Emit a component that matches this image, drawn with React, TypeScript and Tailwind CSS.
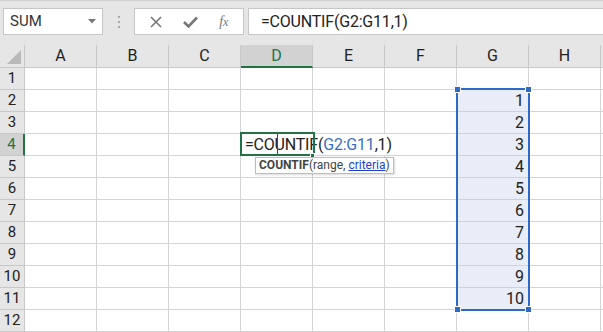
import React from 'react';

const cols = ['A', 'B', 'C', 'D', 'E', 'F', 'G', 'H', ''];
const rows = [1, 2, 3, 4, 5, 6, 7, 8, 9, 10, 11, 12];

function Toolbar() {
  return (
    <div className="h-[45px] bg-[#e6e6e6] border-t border-[#d0d0d0] flex items-start pt-[7px] pl-[3px]">
      {/* Name box */}
      <div className="w-[100px] h-[27px] bg-white border border-[#c6c6c6] flex items-center justify-between pl-[6px] pr-[6px]">
        <span className="text-[15px] text-[#333]">SUM</span>
        <svg width="8" height="5" viewBox="0 0 8 5">
          <path d="M0 0 L8 0 L4 4.5 Z" fill="#777" />
        </svg>
      </div>

      {/* separator dots */}
      <div className="w-[31px] h-[27px] flex flex-col items-center justify-center gap-[3px]">
        <div className="w-[2px] h-[2px] bg-[#a8a8a8]" />
        <div className="w-[2px] h-[2px] bg-[#a8a8a8]" />
        <div className="w-[2px] h-[2px] bg-[#a8a8a8]" />
      </div>

      {/* cancel / enter / fx */}
      <div className="w-[110px] h-[27px] bg-white border border-[#c6c6c6] flex items-center justify-around px-[4px]">
        <svg width="12" height="12" viewBox="0 0 12 12">
          <path d="M1 1 L11 11 M11 1 L1 11" stroke="#777" strokeWidth="1.6" />
        </svg>
        <svg width="15" height="12" viewBox="0 0 15 12">
          <path d="M1 6 L5.5 10.5 L14 1.5" stroke="#777" strokeWidth="2.6" fill="none" />
        </svg>
        <span className="font-['Liberation_Serif',serif] italic text-[14px] text-[#777] leading-none">
          f<span className="text-[12px]">x</span>
        </span>
      </div>

      {/* formula input */}
      <div className="ml-[4px] flex-1 h-[27px] bg-white border border-r-0 border-[#c6c6c6] flex items-center pl-[12px]">
        <span className="text-[16px] text-[#222] tracking-[-0.2px]">=COUNTIF(G2:G11,1)</span>
      </div>
    </div>
  );
}

export default function App() {
  return (
    <div className="w-[603px] h-[332px] overflow-hidden bg-white font-['Roboto',sans-serif] text-[#222]">
      <Toolbar />

      <div className="relative">
        <div className="grid grid-cols-[25px_repeat(9,72px)] grid-rows-[23px_repeat(12,22px)]">
          {/* corner */}
          <div className="bg-[#e6e6e6] border-r border-b border-[#c8c8c8] flex items-end justify-end pr-[3px] pb-[3px]">
            <svg width="14" height="14" viewBox="0 0 14 14">
              <path d="M14 0 L14 14 L0 14 Z" fill="#b9b9b9" />
            </svg>
          </div>
          {cols.map((c, i) =>
            c === 'D' ? (
              <div
                key={i}
                className="bg-[#d2d2d2] border-r border-[#c8c8c8] border-b-2 border-b-[#217346] flex items-center justify-center text-[16px] text-[#217346]"
              >
                {c}
              </div>
            ) : (
              <div
                key={i}
                className="bg-[#e6e6e6] border-r border-b border-[#c8c8c8] flex items-center justify-center text-[16px] text-[#222]"
              >
                {c}
              </div>
            )
          )}

          {rows.map((r) => (
            <React.Fragment key={r}>
              {r === 4 ? (
                <div className="bg-[#d2d2d2] border-b border-[#c8c8c8] border-r-2 border-r-[#217346] flex items-center justify-center text-[15px] text-[#217346]">
                  {r}
                </div>
              ) : (
                <div className="bg-[#e6e6e6] border-r border-b border-[#c8c8c8] flex items-center justify-center text-[15px] text-[#222]">
                  {r}
                </div>
              )}
              {cols.map((c, i) => {
                const inSel = c === 'G' && r >= 2 && r <= 11;
                return (
                  <div
                    key={i}
                    className={
                      inSel
                        ? 'bg-[#e8edf7] border-r border-b border-[#cdd1d8] flex items-center justify-end pr-[4px] text-[16px]'
                        : 'border-r border-b border-[#d4d4d4]'
                    }
                  >
                    {inSel ? r - 1 : null}
                  </div>
                );
              })}
            </React.Fragment>
          ))}
        </div>

        {/* edit area of D4, spills to the right */}
        <div className="absolute left-[242px] top-[89px] w-[214px] h-[21px] bg-white flex items-center pl-[3px] text-[16px] tracking-[-0.2px] whitespace-nowrap">
          <span>=COUNTIF(</span>
          <span className="text-[#3a6fc4]">G2:G11</span>
          <span>,1)</span>
        </div>
        <div className="absolute left-[277px] top-[88px] w-px h-[21px] bg-[#444]" />

        {/* active cell border */}
        <div className="absolute left-[240px] top-[87px] w-[75px] h-[24px] border-2 border-[#217346]" />
        <div className="absolute left-[310px] top-[108px] w-[5px] h-[5px] bg-[#217346] border border-white" />

        {/* range selection G2:G11 */}
        <div className="absolute left-[456px] top-[43px] w-[74px] h-[223px] border-2 border-[#3068c8]" />
        <div className="absolute left-[454px] top-[41px] w-[7px] h-[7px] bg-[#3068c8] border border-white" />
        <div className="absolute left-[525px] top-[41px] w-[7px] h-[7px] bg-[#3068c8] border border-white" />
        <div className="absolute left-[454px] top-[261px] w-[7px] h-[7px] bg-[#3068c8] border border-white" />
        <div className="absolute left-[525px] top-[261px] w-[7px] h-[7px] bg-[#3068c8] border border-white" />

        {/* function tooltip */}
        <div className="absolute left-[255px] top-[112px] h-[17px] px-[3px] bg-white border border-[#bdbdbd] shadow-[1px_1px_2px_rgba(0,0,0,0.15)] text-[12px] leading-[15px] text-[#444] whitespace-nowrap">
          <span className="font-bold">COUNTIF</span>(range,{' '}
          <span className="text-[#1a3fd8] underline">criteria</span>)
        </div>
      </div>
    </div>
  );
}
